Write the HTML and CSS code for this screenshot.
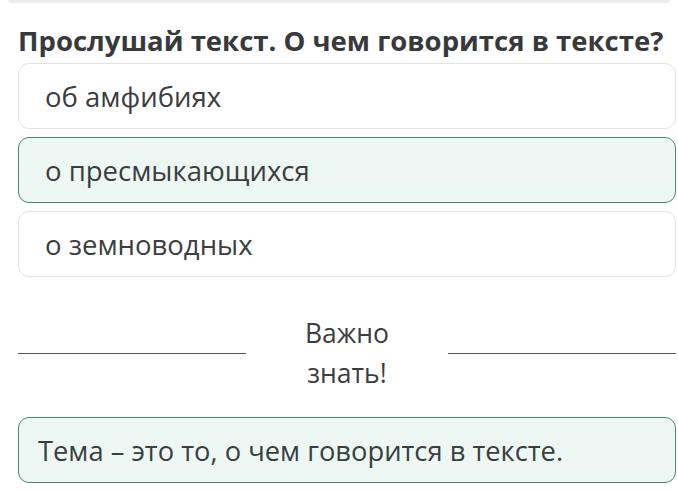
FILE: index.html
```html
<!DOCTYPE html>
<html lang="ru">
<head>
<meta charset="utf-8">
<link rel="stylesheet" href="styles.css">
</head>
<body>
<div class="topcard"></div>
<main class="page">
  <h1 class="question">Прослушай текст. О чем говорится в тексте?</h1>
  <div class="options">
    <div class="option">об амфибиях</div>
    <div class="option selected">о пресмыкающихся</div>
    <div class="option">о земноводных</div>
  </div>
  <div class="divider">
    <span class="rule"></span>
    <span class="label">Важно<br>знать!</span>
    <span class="rule"></span>
  </div>
  <div class="note">Тема – это то, о чем говорится в тексте.</div>
</main>
</body>
</html>
```
FILE: styles.css
```css
* { box-sizing: border-box; }
html, body { margin: 0; padding: 0; background: #fff; }
body {
  font-family: "Open Sans", "Noto Sans", sans-serif;
  color: #3b3d3f;
  width: 678px;
  height: 490px;
  overflow: hidden;
}
.topcard {
  height: 3px;
  margin: 0 8px;
  background: #ececec;
  border-radius: 0 0 4px 4px;
}
.page { padding: 0 2px 0 18px; }
.question {
  margin: 22px 0 0;
  font-size: 27.5px;
  font-weight: 700;
  line-height: 32px;
  height: 38px;
  white-space: nowrap;
  color: #37393b;
}
.options { display: flex; flex-direction: column; gap: 8px; }
.option {
  height: 66px;
  border: 1px solid #e3e3e3;
  border-radius: 11px;
  background: #fff;
  padding: 0 0 0 26px;
  display: flex;
  align-items: center;
  font-size: 27.5px;
  white-space: nowrap;
}
.option.selected {
  background: #edf8f4;
  border-color: #4d857d;
}
.divider {
  display: flex;
  align-items: center;
  margin-top: 36px;
  height: 80px;
}
.rule { flex: 1; height: 1px; background: #555; }
.label {
  width: 202px;
  text-align: center;
  font-size: 26.5px;
  line-height: 40px;
  font-weight: 400;
}
.note {
  margin-top: 24px;
  height: 66px;
  border: 1px solid #4d857d;
  border-radius: 11px;
  background: #edf8f4;
  display: flex;
  align-items: center;
  padding-left: 19px;
  font-size: 27.3px;
  white-space: nowrap;
}
```
